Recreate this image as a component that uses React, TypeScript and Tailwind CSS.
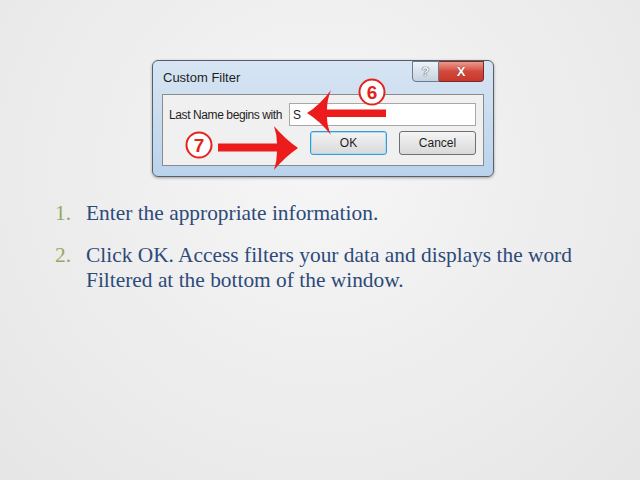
import React from 'react';

const serif = { fontFamily: '"Liberation Serif", "Times New Roman", serif' };
const ui = { fontFamily: '"Liberation Sans", Arial, sans-serif' };

const steps = [
  'Enter the appropriate information.',
  'Click OK. Access filters your data and displays the word Filtered at the bottom of the window.',
];

// red call-out arrows and numbered circles drawn over the dialog
const Callouts = () => (
  <svg
    className="absolute left-[-1px] top-[-1px] overflow-visible"
    width="342"
    height="117"
    viewBox="0 0 342 117"
  >
    {/* arrow 6 */}
    <path d="M155 53 Q168 45 179 30 Q175 40 175 49.5 L234 49.5 L234 57 L175 57 Q175 66 179 75 Q168 61 155 53 Z" fill="#ec1c1c" />
    {/* arrow 7 */}
    <path d="M146 88 Q133 79 122 66 Q125 75 125 83.5 L66 83.5 L66 91.5 L125 91.5 Q125 101 122 110 Q133 97 146 88 Z" fill="#ec1c1c" />
    <circle cx="220" cy="32" r="12.5" fill="#ffffff" stroke="#e3231c" strokeWidth="2" />
    <text x="220" y="39" textAnchor="middle" fontSize="19" fontWeight="700" fill="#e3231c" fontFamily="Liberation Sans, Arial, sans-serif">
      6
    </text>
    <circle cx="47" cy="85" r="12.5" fill="#ffffff" stroke="#e3231c" strokeWidth="2" />
    <text x="47" y="92" textAnchor="middle" fontSize="19" fontWeight="700" fill="#e3231c" fontFamily="Liberation Sans, Arial, sans-serif">
      7
    </text>
  </svg>
);

const CustomFilterDialog = () => (
  <div
    className="relative w-[342px] h-[117px] rounded-[6px] border border-[#56606c] bg-gradient-to-b from-[#d7e5f3] via-[#c9dcef] to-[#b9d3ec] shadow-[0_1px_3px_rgba(0,0,0,0.35)]"
    style={ui}
  >
    {/* Title bar */}
    <div className="flex h-[33px]">
      <span className="pl-[10px] pt-[10px] text-[13px] text-[#1e1e1e] leading-none">Custom Filter</span>
      <div className="ml-auto mr-[9px] flex items-start">
        <div className="flex h-[21px] w-[27px] items-center justify-center rounded-bl-[4px] border border-[#6c7a8a] bg-gradient-to-b from-[#eef3f8] to-[#c5d2df] text-[13px] font-bold text-[#f6f8fa] [text-shadow:0_0_1px_#3b4a5a,0_0_1px_#3b4a5a]">
          ?
        </div>
        <div className="flex h-[21px] w-[45px] items-center justify-center rounded-br-[4px] border border-l-0 border-[#7a2a24] bg-gradient-to-b from-[#e99a8e] via-[#d2493c] to-[#c8362a] text-[13px] font-bold text-white [text-shadow:0_0_1px_#5a1410]">
          X
        </div>
      </div>
    </div>

    {/* Body panel */}
    <div className="mx-[9px] h-[72px] border border-[#8b8b8b] bg-[#f0f0f0]">
      <div className="mt-[8px] flex items-center">
        <span className="pl-[6px] text-[12px] tracking-[-0.4px] text-[#1e1e1e]">Last Name begins with</span>
        <div className="ml-auto mr-[7px] flex h-[23px] w-[187px] items-center border border-[#a8a8a8] bg-white pl-[3px] text-[12px] text-[#222]">
          S
        </div>
      </div>
      <div className="mr-[7px] mt-[5px] flex justify-end gap-[12px]">
        <div className="flex h-[24px] w-[77px] items-center justify-center rounded-[3px] border border-[#3c9ad0] bg-gradient-to-b from-[#f4f4f4] to-[#d9d9d9] text-[12px] text-[#1e1e1e] shadow-[inset_0_0_0_1px_#a6dcf4]">
          OK
        </div>
        <div className="flex h-[24px] w-[77px] items-center justify-center rounded-[3px] border border-[#707070] bg-gradient-to-b from-[#f4f4f4] to-[#d9d9d9] text-[12px] text-[#1e1e1e]">
          Cancel
        </div>
      </div>
    </div>

    <Callouts />
  </div>
);

export default function App() {
  return (
    <div className="h-[480px] w-[640px] overflow-hidden bg-[radial-gradient(ellipse_at_50%_35%,#f6f6f6_0%,#ececec_60%,#e6e6e6_100%)]">
      <div className="pl-[152px] pt-[60px]">
        <CustomFilterDialog />
      </div>

      <ol className="mt-[24px] flex flex-col gap-[17px] pl-[55px] pr-[30px]" style={serif}>
        {steps.map((step, i) => (
          <li key={i} className="flex text-[21.4px] leading-[25px]">
            <span className="w-[31px] shrink-0 text-[#93a860]">{i + 1}.</span>
            <span className="text-[#2d4a79]">{step}</span>
          </li>
        ))}
      </ol>
    </div>
  );
}
